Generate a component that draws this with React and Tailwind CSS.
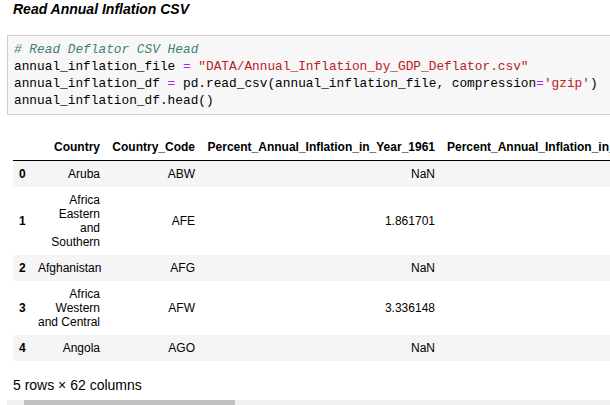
const rows = [
  { idx: '0', country: ['Aruba'], code: 'ABW', val: 'NaN' },
  { idx: '1', country: ['Africa', 'Eastern', 'and', 'Southern'], code: 'AFE', val: '1.861701' },
  { idx: '2', country: ['Afghanistan'], code: 'AFG', val: 'NaN' },
  { idx: '3', country: ['Africa', 'Western', 'and Central'], code: 'AFW', val: '3.336148' },
  { idx: '4', country: ['Angola'], code: 'AGO', val: 'NaN' },
];

const Eq = () => <span className="text-[#aa22ff]">=</span>;
const Str = ({ children }) => <span className="text-[#ba2121]">{children}</span>;

export default function App() {
  return (
    <div className="w-[610px] h-[405px] overflow-hidden bg-white text-black font-['Liberation_Sans',Arial,sans-serif]">
      {/* Markdown heading */}
      <div className="pl-[13px] h-[18px] text-[14px] leading-[18px] font-bold italic">Read Annual Inflation CSV</div>

      {/* Code cell */}
      <div className="mt-[17px] ml-[7px] w-[620px] border border-[#cfcfcf] bg-[#f7f7f7] pl-[6px] pt-[5px] pb-[5px]">
        <pre className="font-['Liberation_Mono',monospace] text-[12.8px] leading-[17px] whitespace-pre">
          <span className="italic text-[#408080]"># Read Deflator CSV Head</span>
          {'\n'}annual_inflation_file <Eq /> <Str>"DATA/Annual_Inflation_by_GDP_Deflator.csv"</Str>
          {'\n'}annual_inflation_df <Eq /> pd.read_csv(annual_inflation_file, compression<Eq /><Str>'gzip'</Str>)
          {'\n'}annual_inflation_df.head()
        </pre>
      </div>

      {/* Output dataframe */}
      <div className="mt-[19px] ml-[13px] w-[597px] overflow-hidden">
        <table className="table-fixed w-[700px] border-collapse text-[12px] leading-[14px]">
          <colgroup>
            <col className="w-[19px]" />
            <col className="w-[74px]" />
            <col className="w-[95px]" />
            <col className="w-[240px]" />
            <col className="w-[272px]" />
          </colgroup>
          <thead>
            <tr className="border-b border-black">
              <th className="p-[6px]"></th>
              <th className="p-[6px] text-right font-bold">Country</th>
              <th className="p-[6px] text-right font-bold">Country_Code</th>
              <th className="p-[6px] text-right font-bold">Percent_Annual_Inflation_in_Year_1961</th>
              <th className="p-[6px] text-left font-bold whitespace-nowrap">Percent_Annual_Inflation_in_Year_1962</th>
            </tr>
          </thead>
          <tbody>
            {rows.map((r, i) => (
              <tr key={r.idx} className={i % 2 === 0 ? 'bg-[#f5f5f5]' : 'bg-white'}>
                <th className="p-[6px] text-left font-bold align-middle">{r.idx}</th>
                <td className="p-[6px] text-right align-middle">
                  {r.country.map((c, j) => (
                    <div key={j} className="whitespace-nowrap">{c}</div>
                  ))}
                </td>
                <td className="p-[6px] text-right align-middle">{r.code}</td>
                <td className="p-[6px] text-right align-middle">{r.val}</td>
                <td className="p-[6px]"></td>
              </tr>
            ))}
          </tbody>
        </table>
      </div>

      <div className="mt-[16px] pl-[13px] text-[14px] leading-[16px]">5 rows × 62 columns</div>

      {/* Horizontal scrollbar */}
      <div className="mt-[7px] ml-[7px] h-[8px] bg-[#f1f1f1] pl-[17px]">
        <div className="w-[211px] h-[8px] bg-[#c1c1c1]"></div>
      </div>
    </div>
  );
}
